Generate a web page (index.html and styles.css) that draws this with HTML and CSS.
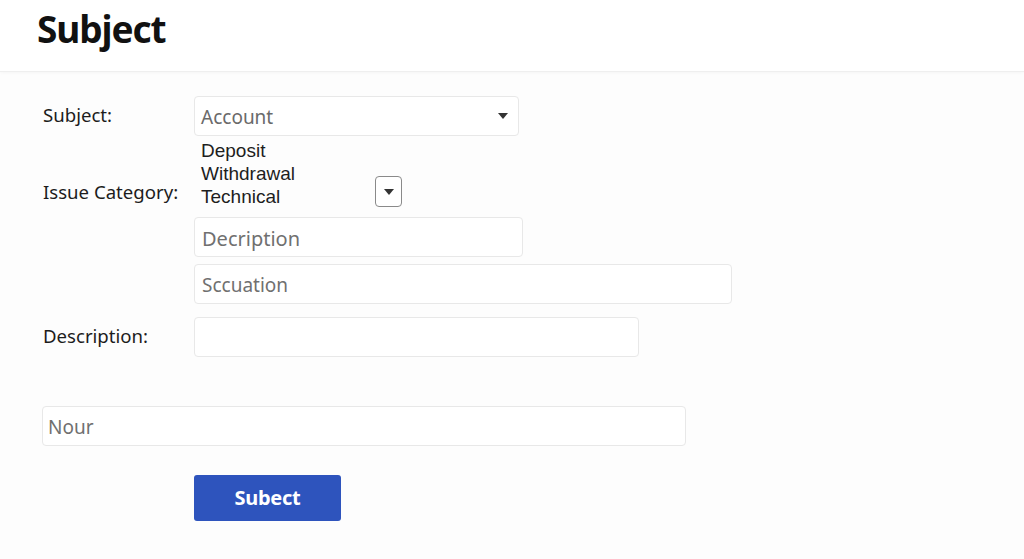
FILE: index.html
```html
<!DOCTYPE html>
<html lang="en">
<head>
<meta charset="utf-8">
<title>Subject</title>
<link rel="stylesheet" href="styles.css">
</head>
<body>
<header class="topbar">
  <h1 class="title">Subject</h1>
</header>
<main class="form">
  <div class="row row-subject">
    <label class="label">Subject:</label>
    <div class="select select-subject">
      <span class="select-value">Account</span>
      <span class="caret"></span>
    </div>
  </div>
  <div class="row row-category">
    <label class="label label-category">Issue Category:</label>
    <div class="category">
      <ul class="options">
        <li>Deposit</li>
        <li>Withdrawal</li>
        <li>Technical</li>
      </ul>
      <div class="mini-select"><span class="caret"></span></div>
    </div>
  </div>
  <div class="row row-decription">
    <span class="spacer"></span>
    <div class="field field-decription"><span class="placeholder">Decription</span></div>
  </div>
  <div class="row row-sccuation">
    <span class="spacer"></span>
    <div class="field field-sccuation"><span class="placeholder">Sccuation</span></div>
  </div>
  <div class="row row-description">
    <label class="label">Description:</label>
    <div class="field field-description"></div>
  </div>
  <div class="row row-nour">
    <div class="field field-nour"><span class="placeholder">Nour</span></div>
  </div>
  <div class="row row-submit">
    <span class="spacer"></span>
    <button class="submit" type="button">Subect</button>
  </div>
</main>
</body>
</html>
```
FILE: styles.css
```css
* { box-sizing: border-box; }
html, body { margin: 0; padding: 0; }
body {
  width: 1024px;
  height: 559px;
  overflow: hidden;
  background: #fdfdfd;
  font-family: "Noto Sans", "Open Sans", sans-serif;
  color: #1a1a1a;
}
.topbar {
  height: 72px;
  background: #ffffff;
  border-bottom: 1px solid #efefef;
  box-shadow: 0 1px 3px rgba(0,0,0,0.03);
  padding-left: 37px;
  display: flex;
  align-items: flex-start;
}
.title {
  margin: 0;
  margin-top: 4px;
  font-size: 37px;
  line-height: 50px;
  font-weight: 700;
  letter-spacing: -1.1px;
  color: #111;
}
.form {
  display: flex;
  flex-direction: column;
  padding-left: 42px;
  padding-top: 24px;
}
.row {
  display: flex;
  align-items: center;
}
.label, .spacer {
  width: 152px;
  flex: none;
  font-size: 18.6px;
  color: #1c1c1c;
  padding-left: 1px;
  padding-bottom: 4px;
}
.select, .field {
  height: 40px;
  background: #ffffff;
  border: 1px solid #e8e8e8;
  border-radius: 4px;
  display: flex;
  align-items: center;
}
.select-subject {
  width: 325px;
  padding: 0 10px 0 6px;
  justify-content: space-between;
}
.select-value {
  font-size: 19px;
  color: #6a6a6a;
  padding-top: 2px;
}
.caret {
  width: 0;
  height: 0;
  border-left: 5px solid transparent;
  border-right: 5px solid transparent;
  border-top: 6px solid #333;
}
.row-category {
  margin-top: 3px;
  align-items: flex-end;
}
.label-category {
  margin-bottom: 4px;
  padding-bottom: 0;
}
.category {
  display: flex;
  align-items: flex-end;
}
.options {
  list-style: none;
  margin: 0;
  padding: 0 0 0 7px;
  width: 181px;
  font-family: "Liberation Sans", "Noto Sans", sans-serif;
  font-size: 19px;
  line-height: 23px;
  color: #1e1e1e;
}
.mini-select {
  width: 27px;
  height: 31px;
  margin-bottom: 1px;
  border: 1px solid #8a8a8a;
  border-radius: 4px;
  background: #fff;
  display: flex;
  align-items: center;
  justify-content: center;
}
.placeholder {
  font-size: 20px;
  color: #707070;
  padding-left: 7px;
  padding-top: 2px;
}
.row-decription { margin-top: 9px; }
.field-decription { width: 329px; }
.row-sccuation { margin-top: 7px; }
.field-sccuation { width: 538px; }
.field-sccuation .placeholder { font-size: 19px; }
.row-description { margin-top: 13px; }
.field-description { width: 445px; }
.row-nour { margin-top: 49px; }
.field-nour { width: 644px; }
.field-nour .placeholder { padding-left: 5px; font-size: 19px; }
.row-submit { margin-top: 29px; }
.submit {
  width: 147px;
  height: 46px;
  border: none;
  border-radius: 3px;
  background: #2e54bd;
  color: #ffffff;
  font-family: "Noto Sans", "Open Sans", sans-serif;
  font-size: 20px;
  font-weight: 700;
  letter-spacing: -0.3px;
  padding-bottom: 2px;
  cursor: pointer;
}
```
